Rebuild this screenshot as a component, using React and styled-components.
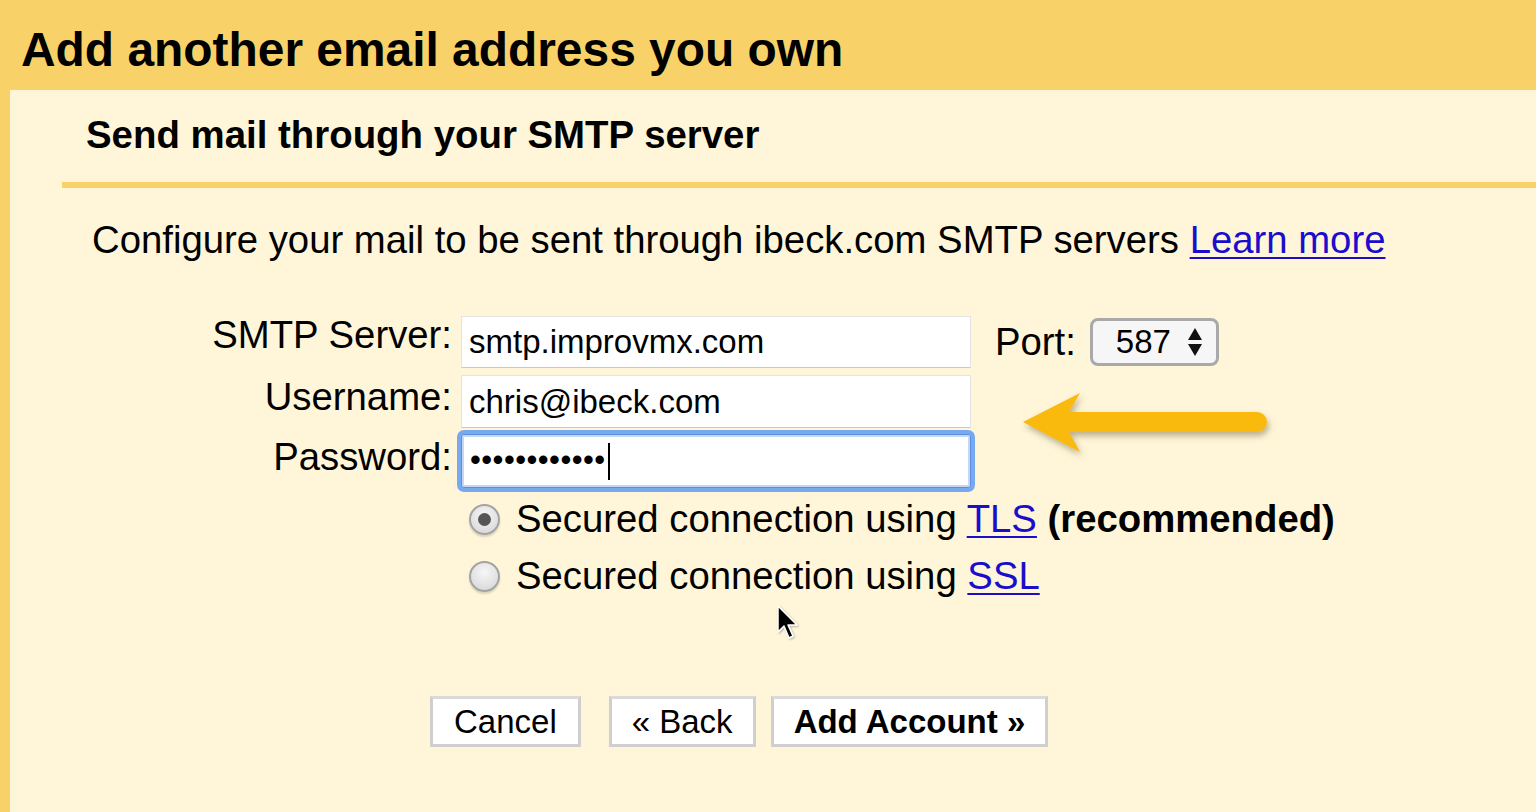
import React from "react";
import styled, { createGlobalStyle } from "styled-components";

const YELLOW = "#f8d269";
const CREAM = "#fff6da";
const LINK = "#1a0dcc";

const GlobalStyle = createGlobalStyle`
  html, body {
    margin: 0;
    padding: 0;
    background: ${CREAM};
    font-family: "Liberation Sans", Arial, sans-serif;
    color: #000;
  }
`;

const Page = styled.div`
  position: relative;
  width: 1536px;
  height: 812px;
  overflow: hidden;
  background: ${CREAM};
`;

const Header = styled.div`
  height: 90px;
  background: ${YELLOW};
  display: flex;
  align-items: center;
  padding-left: 21px;
`;

const Title = styled.h1`
  margin: 0;
  font-size: 47.9px;
  font-weight: bold;
  padding-top: 8px;
`;

const Body = styled.div`
  border-left: 10px solid ${YELLOW};
  height: 722px;
  box-sizing: border-box;
`;

const SubHeader = styled.div`
  height: 92px;
  display: flex;
  align-items: center;
  padding-left: 76px;
  padding-bottom: 2px;
  box-sizing: border-box;
  font-size: 38.4px;
  font-weight: bold;
`;

const Rule = styled.div`
  height: 6px;
  margin-left: 52px;
  background: ${YELLOW};
`;

const Description = styled.p`
  margin: 0;
  padding: 30px 0 0 82px;
  font-size: 38.3px;
  line-height: 44px;
`;

const Link = styled.a`
  color: ${LINK};
  text-decoration: underline;
  text-decoration-thickness: 2px;
  text-underline-offset: 4px;
`;

const Form = styled.div`
  display: grid;
  grid-template-columns: 442px 510px auto;
  column-gap: 9px;
  margin-top: 54px;
`;

const Label = styled.div`
  text-align: right;
  font-size: 38.3px;
  height: ${({ $h }) => $h}px;
  line-height: ${({ $lh }) => $lh}px;
  margin-top: ${({ $mt }) => $mt || 0}px;
`;

const Field = styled.div`
  height: ${({ $h }) => $h}px;
  margin-top: ${({ $mt }) => $mt || 0}px;
  box-sizing: border-box;
  background: #fff;
  border: 1px solid ${({ $focus }) => ($focus ? "#5a8fe0" : "#e4e4e4")};
  border-bottom-color: ${({ $focus }) => ($focus ? "#5a8fe0" : "#c8c8c8")};
  box-shadow: ${({ $focus }) =>
    $focus ? "0 0 0 4px #78a8ee, inset 0 0 0 2px #c4d8f6" : "none"};
  border-radius: ${({ $focus }) => ($focus ? "3px" : "0")};
  display: flex;
  align-items: center;
  padding-left: ${({ $focus }) => ($focus ? 8 : 7)}px;
  font-size: 33px;
  color: #000;
`;

const Dots = styled.span`
  font-size: 31px;
  letter-spacing: 0.45px;
  position: relative;
  top: -1px;
`;

const Caret = styled.span`
  display: inline-block;
  width: 2px;
  height: 37px;
  background: #000;
  margin-left: 2px;
`;

const PortCell = styled.div`
  display: flex;
  align-items: center;
  gap: 14px;
  font-size: 38.3px;
  padding-left: 15px;
  height: 52px;
`;

const Select = styled.div`
  width: 129px;
  height: 48px;
  box-sizing: border-box;
  border: 3px solid #a9a9a9;
  border-radius: 8px;
  background: #f6f6f6;
  display: flex;
  align-items: center;
  justify-content: flex-end;
  gap: 16px;
  padding-right: 13px;
  font-size: 33px;
`;

const Options = styled.div`
  grid-column: 2 / 4;
  display: flex;
  flex-direction: column;
  gap: 17px;
  margin-top: 10px;
  margin-left: 8px;
`;

const Option = styled.label`
  display: flex;
  align-items: center;
  gap: 16px;
  font-size: 38.3px;
  height: 40px;
`;

const Radio = styled.span`
  width: 31px;
  height: 31px;
  flex: none;
  border-radius: 50%;
  box-sizing: border-box;
  border: 2px solid #a3a3a3;
  background: radial-gradient(circle at 50% 35%, #f6f6f6 0%, #dedede 70%, #cfcfcf 100%);
  box-shadow: 0 2px 2px rgba(0, 0, 0, 0.15);
  display: flex;
  align-items: center;
  justify-content: center;

  &::after {
    content: "";
    width: 13px;
    height: 13px;
    border-radius: 50%;
    background: #555;
    display: ${({ $checked }) => ($checked ? "block" : "none")};
  }
`;

const Buttons = styled.div`
  display: flex;
  margin: 100px 0 0 420px;
`;

const Button = styled.button`
  height: 51px;
  box-sizing: border-box;
  border: 3px solid #cfcfcf;
  border-top-color: #dadada;
  background: #fff;
  font-family: "Liberation Sans", Arial, sans-serif;
  font-size: 33px;
  font-weight: ${({ $primary }) => ($primary ? "bold" : "normal")};
  color: #000;
  padding: 0 ${({ $pad }) => $pad}px;
  margin-right: ${({ $gap }) => $gap}px;
  cursor: default;
`;

const Overlay = styled.svg`
  position: absolute;
  left: 0;
  top: 0;
  pointer-events: none;
`;

export default function App() {
  return (
    <>
      <GlobalStyle />
      <Page>
        <Header>
          <Title>Add another email address you own</Title>
        </Header>
        <Body>
          <SubHeader>Send mail through your SMTP server</SubHeader>
          <Rule />
          <Description>
            Configure your mail to be sent through ibeck.com SMTP servers{" "}
            <Link href="#">Learn more</Link>
          </Description>
          <Form>
            <Label $h={52} $lh={38}>SMTP Server:</Label>
            <Field $h={52}>smtp.improvmx.com</Field>
            <PortCell>
              Port:
              <Select>
                587
                <svg width="16" height="30" viewBox="0 0 16 30">
                  <path d="M8 1 L15 13 L1 13 Z M8 29 L15 17 L1 17 Z" fill="#111" />
                </svg>
              </Select>
            </PortCell>

            <Label $h={52} $lh={44} $mt={7}>Username:</Label>
            <Field $h={53} $mt={7}>chris@ibeck.com</Field>
            <div />

            <Label $h={54} $lh={44} $mt={7}>Password:</Label>
            <Field $h={54} $mt={6} $focus>
              <Dots>••••••••••••</Dots>
              <Caret />
            </Field>
            <div />

            <div />
            <Options>
              <Option>
                <Radio $checked />
                <span>
                  Secured connection using <Link href="#">TLS</Link>{" "}
                  <b>(recommended)</b>
                </span>
              </Option>
              <Option>
                <Radio />
                <span>
                  Secured connection using <Link href="#">SSL</Link>
                </span>
              </Option>
            </Options>
          </Form>
          <Buttons>
            <Button $pad={21} $gap={28}>Cancel</Button>
            <Button $pad={20} $gap={15}>« Back</Button>
            <Button $primary $pad={20} $gap={0}>Add Account »</Button>
          </Buttons>
        </Body>
        <Overlay width="1536" height="812" viewBox="0 0 1536 812">
          <defs>
            <filter id="arrowShadow" x="-10%" y="-30%" width="130%" height="180%">
              <feDropShadow dx="2" dy="4" stdDeviation="3" floodColor="#6b5a2a" floodOpacity="0.45" />
            </filter>
            <filter id="cursorShadow" x="-50%" y="-50%" width="200%" height="200%">
              <feDropShadow dx="1" dy="1" stdDeviation="1" floodColor="#000" floodOpacity="0.3" />
            </filter>
          </defs>
          <path
            d="M1023 422 L1080 393 L1069 412 L1257 412 A10 10 0 0 1 1257 432 L1069 432 L1080 452 Z"
            fill="#fab90c"
            filter="url(#arrowShadow)"
          />
          <path
            d="M778 606 L778 632 L784 626 L789 638 L793 636 L788 625 L797 625 Z"
            fill="#000"
            stroke="#fff"
            strokeWidth="1.5"
            strokeLinejoin="round"
            filter="url(#cursorShadow)"
          />
        </Overlay>
      </Page>
    </>
  );
}
